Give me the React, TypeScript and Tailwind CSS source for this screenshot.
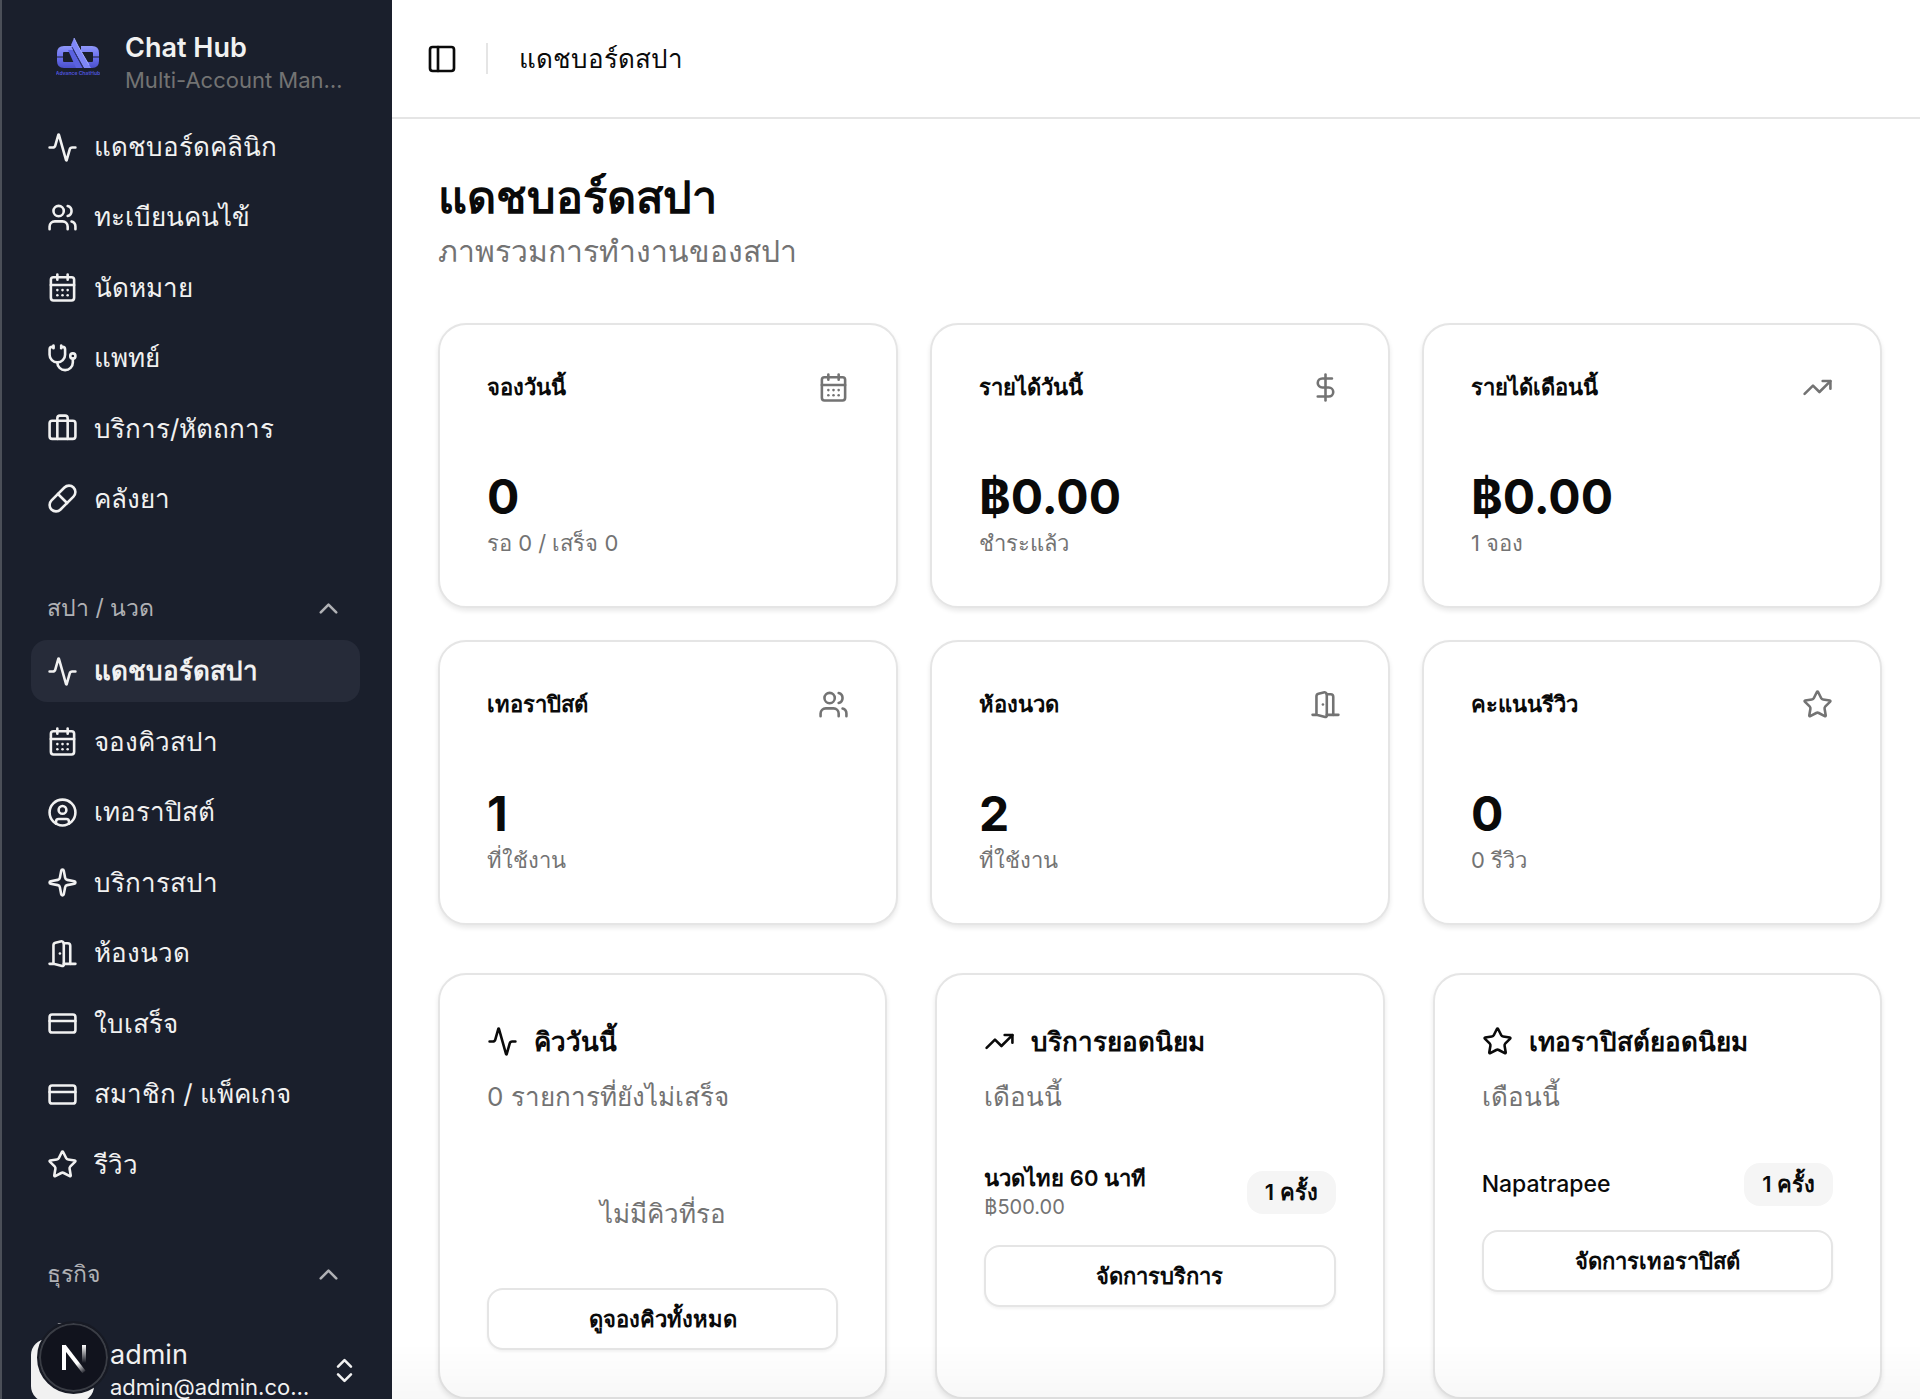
import {
  Activity,
  Briefcase,
  CalendarDays,
  ChevronsUpDown,
  ChevronUp,
  CircleUser,
  CreditCard,
  DollarSign,
  PanelLeft,
  Pill,
  Sparkle,
  Star,
  Stethoscope,
  TrendingUp,
  Users,
} from "lucide-react";
import type { ComponentType, ReactNode } from "react";

type TIcon = ComponentType<{ className?: string }>;
type TNavItem = { title: string; icon: TIcon; active?: boolean };
type TStat = { title: string; icon: TIcon; value: string; note: string };

const clinicItems: TNavItem[] = [
  { title: "แดชบอร์ดคลินิก", icon: Activity },
  { title: "ทะเบียนคนไข้", icon: Users },
  { title: "นัดหมาย", icon: CalendarDays },
  { title: "แพทย์", icon: Stethoscope },
  { title: "บริการ/หัตถการ", icon: Briefcase },
  { title: "คลังยา", icon: Pill },
];

const spaItems: TNavItem[] = [
  { title: "แดชบอร์ดสปา", icon: Activity, active: true },
  { title: "จองคิวสปา", icon: CalendarDays },
  { title: "เทอราปิสต์", icon: CircleUser },
  { title: "บริการสปา", icon: Sparkle },
  { title: "ห้องนวด", icon: DoorIcon },
  { title: "ใบเสร็จ", icon: CreditCard },
  { title: "สมาชิก / แพ็คเกจ", icon: CreditCard },
  { title: "รีวิว", icon: Star },
];

const stats: TStat[] = [
  { title: "จองวันนี้", icon: CalendarDays, value: "0", note: "รอ 0 / เสร็จ 0" },
  { title: "รายได้วันนี้", icon: DollarSign, value: "฿0.00", note: "ชำระแล้ว" },
  { title: "รายได้เดือนนี้", icon: TrendingUp, value: "฿0.00", note: "1 จอง" },
  { title: "เทอราปิสต์", icon: Users, value: "1", note: "ที่ใช้งาน" },
  { title: "ห้องนวด", icon: DoorIcon, value: "2", note: "ที่ใช้งาน" },
  { title: "คะแนนรีวิว", icon: Star, value: "0", note: "0 รีวิว" },
];

function DoorIcon({ className }: { className?: string }) {
  return (
    <svg
      viewBox="0 0 24 24"
      fill="none"
      stroke="currentColor"
      strokeWidth="2"
      strokeLinecap="round"
      strokeLinejoin="round"
      className={className}
      aria-hidden="true"
    >
      <path d="M13 4h3a2 2 0 0 1 2 2v14" />
      <path d="M2 20h3" />
      <path d="M13 20h9" />
      <path d="M10 12v.01" />
      <path d="M13 4.562v16.157a1 1 0 0 1-1.242.97L5 20V5.562a2 2 0 0 1 1.515-1.94l4-1A2 2 0 0 1 13 4.561Z" />
    </svg>
  );
}

function Logo() {
  return (
    <svg viewBox="0 0 44 40" className="h-[40px] w-[44px]" aria-hidden="true">
      <defs>
        <linearGradient id="logoFill" x1="0" y1="8" x2="0" y2="30" gradientUnits="userSpaceOnUse">
          <stop offset="0" stopColor="#8f97fa" />
          <stop offset="0.5" stopColor="#6a70ee" />
          <stop offset="1" stopColor="#4a50cc" />
        </linearGradient>
      </defs>
      <g fill="none" stroke="url(#logoFill)" strokeWidth="6">
        <path d="M17 11H8Q4 11 4 15V23Q4 27 8 27H21" />
        <path d="M25 11H36Q40 11 40 15V23Q40 27 36 27H28" />
      </g>
      <path d="M0 19H8M36 19H44" stroke="#1a1f2c" strokeWidth="1" />
      <path d="M12 12H17L27 30H20Z" fill="#5a61e0" />
      <path d="M18 0L15 7L28 30H35L22 8Z" fill="#7f87f8" />
      <path d="M16 9L27 30" stroke="#2c3178" strokeWidth="1" />
      <path d="M18 0L22 8L33 27" fill="none" stroke="#a5acff" strokeWidth="1" />
      <text x="22" y="37" textAnchor="middle" fontSize="5" fontWeight="700" fill="#4a50d0">
        Advance ChatHub
      </text>
    </svg>
  );
}

function NavList({ items }: { items: TNavItem[] }) {
  return (
    <ul className="flex grow flex-col justify-between">
      {items.map(({ title, icon: Icon, active }) => (
        <li key={title}>
          <a
            href="#"
            aria-current={active ? "page" : undefined}
            className={
              active
                ? "flex h-[62px] items-center gap-4 rounded-2xl bg-[#262b39] px-4 text-[26px] font-semibold"
                : "flex h-[62px] items-center gap-4 rounded-2xl px-4 text-[26px]"
            }
          >
            <Icon className="size-[31px] shrink-0" />
            <span className="truncate leading-[62px]">{title}</span>
          </a>
        </li>
      ))}
    </ul>
  );
}

function GroupLabel({ children }: { children: ReactNode }) {
  return (
    <button
      type="button"
      className="flex h-[63px] w-full shrink-0 items-center justify-between px-4 text-[23px] text-[#b0b1b5]"
    >
      {children}
      <ChevronUp className="size-[31px]" />
    </button>
  );
}

function Sidebar() {
  return (
    <aside className="flex w-[392px] shrink-0 flex-col border-l-2 border-[#4b4f58] bg-[#1a1f2c] text-[#f1f1f1]">
      <div className="flex h-[116px] shrink-0 items-center gap-4 pt-[10px] pr-8 pl-[44px]">
        <div className="flex size-[63px] shrink-0 items-start justify-center pt-[6px]">
          <Logo />
        </div>
        <div className="min-w-0">
          <div className="truncate text-[27px] leading-[34px] font-semibold">Chat Hub</div>
          <div className="text-[22px] leading-[31px] whitespace-nowrap text-[#737373]">Multi-Account Man…</div>
        </div>
      </div>
      <nav className="flex min-h-0 flex-1 flex-col gap-[47px] overflow-hidden pr-8 pl-[29px]">
        <div className="flex h-[414px] shrink-0 flex-col">
          <NavList items={clinicItems} />
        </div>
        <div className="flex h-[619px] shrink-0 flex-col">
          <GroupLabel>สปา / นวด</GroupLabel>
          <NavList items={spaItems} />
        </div>
        <div className="shrink-0">
          <GroupLabel>ธุรกิจ</GroupLabel>
          <NavList items={[{ title: "", icon: Briefcase }]} />
        </div>
      </nav>
      {/* user menu, its lower edge runs past the window */}
      <div className="h-[75px] shrink-0 overflow-hidden pr-8 pl-[29px]">
        <button type="button" className="flex h-[92px] w-full items-center gap-4 text-left">
          <span className="size-[63px] shrink-0 rounded-2xl bg-[#f1f1f1]" />
          <span className="min-w-0 flex-1">
            <span className="block truncate text-[27px] leading-[34px]">admin</span>
            <span className="block text-[22px] leading-[31px] whitespace-nowrap">admin@admin.co…</span>
          </span>
          <ChevronsUpDown className="size-[31px] shrink-0" />
        </button>
      </div>
    </aside>
  );
}

function StatCard({ title, icon: Icon, value, note }: TStat) {
  return (
    <section className="flex h-[285px] flex-col justify-between rounded-[28px] border-2 border-[#e5e5e5] bg-white p-[47px] shadow-[0_3px_5px_rgba(0,0,0,0.09)]">
      <div className="flex items-center justify-between">
        <h2 className="text-[22px] leading-[31px] font-semibold">{title}</h2>
        <Icon className="size-[31px] text-[#737373]" />
      </div>
      <div>
        <div className="text-[48px] leading-[63px] font-bold">{value}</div>
        <p className="text-[22px] leading-[31px] text-[#737373]">{note}</p>
      </div>
    </section>
  );
}

type TPanelProps = { title: string; description: string; icon: TIcon; action: string; children: ReactNode };

function Panel({ title, description, icon: Icon, action, children }: TPanelProps) {
  return (
    <section className="rounded-[28px] border-2 border-[#e5e5e5] bg-white p-[47px] shadow-[0_3px_5px_rgba(0,0,0,0.09)]">
      <h2 className="flex items-center gap-4 text-[26px] leading-[39px] font-semibold">
        <Icon className="size-[31px]" />
        {title}
      </h2>
      <p className="mt-4 text-[26px] leading-[39px] text-[#737373]">{description}</p>
      <div className="mt-[47px] flex flex-col gap-6">
        {children}
        <button
          type="button"
          className="h-[62px] w-full rounded-2xl border-2 border-[#e5e5e5] bg-white text-[22px] font-semibold shadow-[0_2px_3px_rgba(0,0,0,0.05)]"
        >
          {action}
        </button>
      </div>
    </section>
  );
}

function CountBadge({ children }: { children: ReactNode }) {
  return (
    <span className="flex h-[43px] items-center rounded-2xl bg-[#f5f5f5] px-[18px] text-[22px] font-semibold">
      {children}
    </span>
  );
}

function DevBadge() {
  return (
    <button
      type="button"
      aria-label="Open dev tools"
      className="fixed bottom-[5px] left-[37px] flex size-[73px] items-center justify-center rounded-full border-2 border-[#171a24] bg-[#11131d] shadow-[inset_0_0_0_2px_#3a3d45]"
    >
      <svg viewBox="0 0 26 30" className="h-[30px] w-[26px]" fill="none" strokeWidth="4" aria-hidden="true">
        <defs>
          <linearGradient id="diag" x1="3" y1="2" x2="24" y2="30" gradientUnits="userSpaceOnUse">
            <stop offset="0.65" stopColor="#fff" />
            <stop offset="1" stopColor="#fff" stopOpacity="0" />
          </linearGradient>
          <linearGradient id="stem" x1="0" y1="2" x2="0" y2="20" gradientUnits="userSpaceOnUse">
            <stop stopColor="#fff" />
            <stop offset="1" stopColor="#fff" stopOpacity="0" />
          </linearGradient>
        </defs>
        <path d="M3 27V2" stroke="#fff" />
        <path d="M3 3L23 29" stroke="url(#diag)" />
        <path d="M23 2V20" stroke="url(#stem)" />
      </svg>
    </button>
  );
}

export default function App() {
  return (
    <div className="flex h-screen overflow-hidden bg-white font-['Inter',sans-serif] text-[#0a0a0a]">
      <Sidebar />
      <div className="min-w-0 flex-1">
        <header className="flex h-[119px] items-center border-b-2 border-[#e5e5e5] pl-[34px]">
          <button type="button" aria-label="Toggle Sidebar">
            <PanelLeft className="size-[32px]" />
          </button>
          <div className="ml-7 h-[31px] w-[2px] bg-[#e5e5e5]" />
          <span className="ml-[31px] text-[26px] leading-[39px]">แดชบอร์ดสปา</span>
        </header>
        <main className="flex flex-col gap-12 py-[46px] pr-[38px] pl-[46px]">
          <div>
            <h1 className="text-[45px] leading-[63px] font-bold">แดชบอร์ดสปา</h1>
            <p className="text-[30px] leading-[47px] text-[#737373]">ภาพรวมการทำงานของสปา</p>
          </div>
          <div className="grid grid-cols-3 gap-8">
            {stats.map((stat) => (
              <StatCard key={stat.title} {...stat} />
            ))}
          </div>
          <div className="grid grid-cols-3 gap-12">
            <Panel title="คิววันนี้" description="0 รายการที่ยังไม่เสร็จ" icon={Activity} action="ดูจองคิวทั้งหมด">
              <p className="py-[31px] text-center text-[26px] leading-[39px] text-[#737373]">ไม่มีคิวที่รอ</p>
            </Panel>
            <Panel title="บริการยอดนิยม" description="เดือนนี้" icon={TrendingUp} action="จัดการบริการ">
              <div className="flex items-center justify-between">
                <div>
                  <p className="text-[22px] leading-[31px] font-semibold">นวดไทย 60 นาที</p>
                  <p className="text-[20px] leading-[27px] text-[#737373]">฿500.00</p>
                </div>
                <CountBadge>1 ครั้ง</CountBadge>
              </div>
            </Panel>
            <Panel title="เทอราปิสต์ยอดนิยม" description="เดือนนี้" icon={Star} action="จัดการเทอราปิสต์">
              <div className="flex items-center justify-between">
                <p className="text-[23px] leading-[31px] font-medium">Napatrapee</p>
                <CountBadge>1 ครั้ง</CountBadge>
              </div>
            </Panel>
          </div>
        </main>
      </div>
      {/* fade at the bottom of the scroll area */}
      <div className="pointer-events-none fixed right-0 bottom-0 left-[392px] h-14 bg-linear-to-t from-black/3 to-transparent" />
      <DevBadge />
    </div>
  );
}
